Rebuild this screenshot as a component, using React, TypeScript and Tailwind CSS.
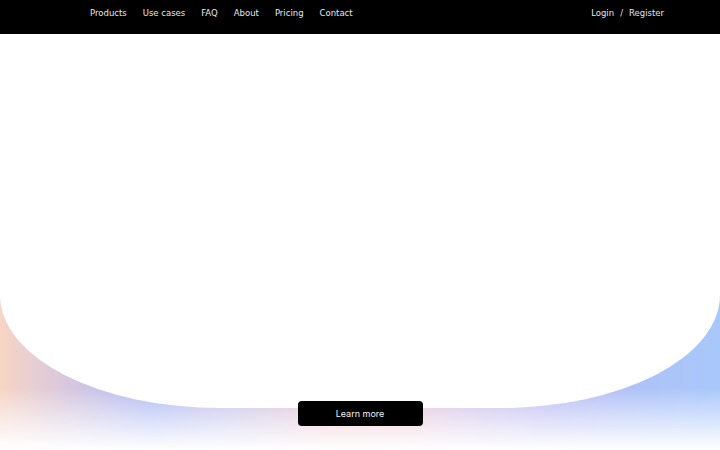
const navLinks = ['Products', 'Use cases', 'FAQ', 'About', 'Pricing', 'Contact']

export default function App() {
  return (
    <div className="w-full min-h-[450px] bg-white font-['DejaVu_Sans',sans-serif]">
      {/* Header */}
      <header className="h-[34px] bg-black flex items-start justify-between pl-[90px] pr-[56px] pt-[6px]">
        <nav className="flex items-center gap-[16px] text-[8.5px] leading-[14px] text-gray-200">
          {navLinks.map((link) => (
            <a key={link} href="#" className="hover:text-white">
              {link}
            </a>
          ))}
        </nav>
        <div className="flex items-center gap-[6px] text-[8.5px] leading-[14px] text-gray-200">
          <a href="#">Login</a>
          <span>/</span>
          <a href="#">Register</a>
        </div>
      </header>

      {/* Hero */}
      <section className="relative h-[416px] bg-[linear-gradient(to_right,#f7d5c5_0%,#d8c8de_9%,#aebcf5_21%,#c9c3e6_34%,#eec2cc_46%,#ecc2cf_56%,#d2c3e9_65%,#bcbdf2_76%,#aec2f7_88%,#a9c7fa_100%)]">
        <div className="absolute inset-0 bg-[linear-gradient(to_bottom,rgba(255,255,255,0)_85%,rgba(255,255,255,0.55)_93%,#ffffff_100%)]" />
        <div className="relative h-[374px] bg-white rounded-b-[220px_113px]" />
        <div className="relative flex justify-center -mt-[7px]">
          <button className="w-[125px] h-[25px] rounded-[4px] bg-black text-gray-100 text-[9px] font-['Inter',sans-serif]">
            Learn more
          </button>
        </div>
      </section>
    </div>
  )
}
